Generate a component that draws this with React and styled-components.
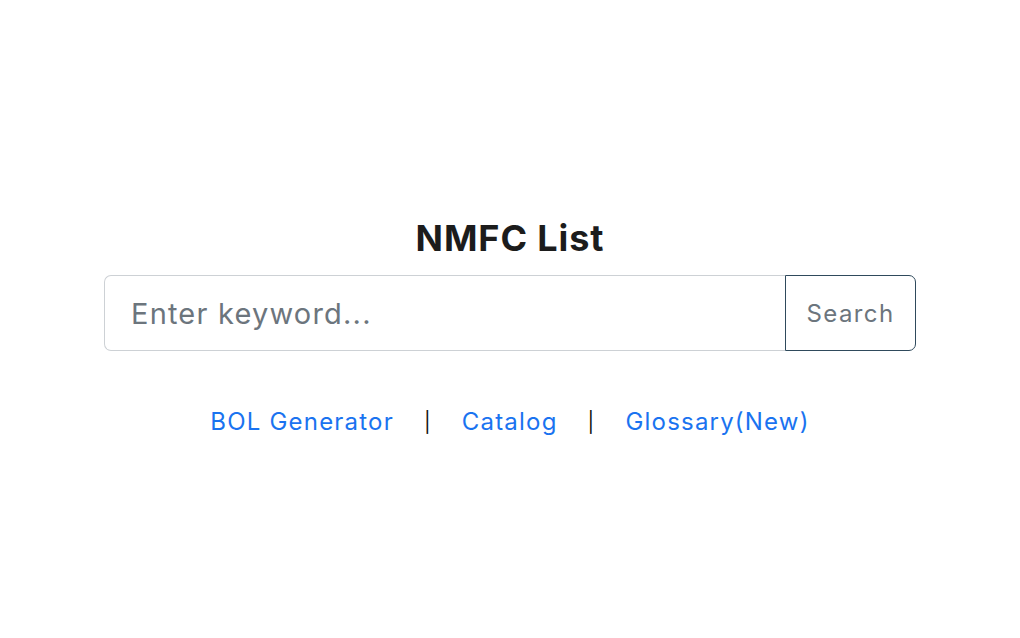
import React from 'react'
import styled, { createGlobalStyle } from 'styled-components'

const GlobalStyle = createGlobalStyle`
  html, body {
    margin: 0;
    background: #fff;
    font-family: Inter, "Noto Sans", sans-serif;
  }
`

const Page = styled.main`
  min-height: 638px;
  display: flex;
  flex-direction: column;
  align-items: center;
  padding-top: 216px;
  box-sizing: border-box;
`

const Title = styled.h1`
  margin: 0 0 15px;
  font-size: 36px;
  line-height: 44px;
  font-weight: 700;
  color: #1c1c1c;
  letter-spacing: 0.9px;
`

const SearchGroup = styled.form`
  display: flex;
  width: 812px;
  height: 76px;
`

const Input = styled.input`
  flex: 1;
  min-width: 0;
  border: 1px solid #cdd1d5;
  border-right: none;
  border-radius: 7px 0 0 7px;
  padding: 0 26px;
  font-family: inherit;
  font-size: 29px;
  letter-spacing: 1.2px;
  color: #333;
  outline: none;

  &::placeholder {
    color: #6c757d;
  }
`

const Button = styled.button`
  width: 131px;
  border: 1px solid #2f4a5c;
  border-radius: 0 7px 7px 0;
  background: #fff;
  color: #6c757d;
  font-family: inherit;
  font-size: 24px;
  letter-spacing: 1.4px;
  cursor: pointer;
`

const Links = styled.nav`
  display: flex;
  align-items: center;
  gap: 30px;
  margin-top: 56px;
  font-size: 24px;
  letter-spacing: 1.2px;
`

const Link = styled.a`
  color: #1a73f0;
  text-decoration: none;
`

const Sep = styled.span`
  color: #111;
  font-size: 20px;
`

export default function App() {
  return (
    <>
      <GlobalStyle />
      <Page>
        <Title>NMFC List</Title>
        <SearchGroup onSubmit={e => e.preventDefault()}>
          <Input placeholder="Enter keyword..." />
          <Button type="submit">Search</Button>
        </SearchGroup>
        <Links>
          <Link href="#">BOL Generator</Link>
          <Sep>|</Sep>
          <Link href="#">Catalog</Link>
          <Sep>|</Sep>
          <Link href="#">Glossary(New)</Link>
        </Links>
      </Page>
    </>
  )
}
